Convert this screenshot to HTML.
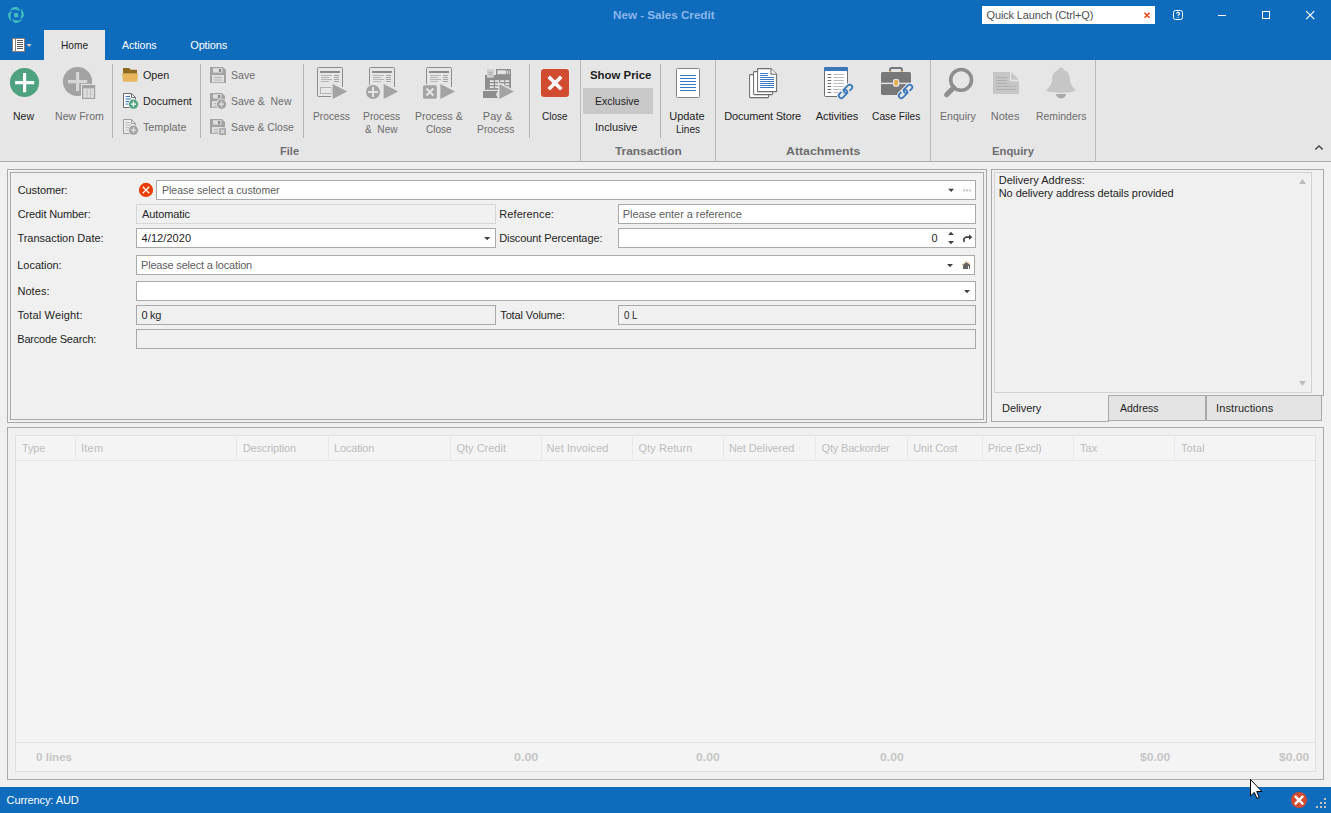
<!DOCTYPE html><html><head><meta charset="utf-8"><title>New - Sales Credit</title><style>
html,body{margin:0;padding:0;}body{width:1331px;height:813px;position:relative;overflow:hidden;background:#f0f0f0;font-family:"Liberation Sans",sans-serif;font-size:11px;color:#1e1e1e;}
div,svg,span{position:absolute;display:block;}span{white-space:pre;line-height:13px;height:13px;}b{font-weight:bold}
</style></head><body>
<div style="left:0px;top:0px;width:1331px;height:60px;background:#0f6cbd;"></div>
<div style="left:0px;top:60px;width:1331px;height:101px;background:#e6e6e6;"></div>
<div style="left:0px;top:161px;width:1331px;height:1px;background:#ababab;"></div>
<div style="left:44px;top:30px;width:61px;height:31px;background:#e6e6e6;"></div>
<div style="left:982px;top:6px;width:173px;height:18px;background:#ffffff;"></div>
<div style="left:0px;top:787px;width:1331px;height:26px;background:#0f6cbd;"></div>
<div style="left:112px;top:64px;width:1px;height:74px;background:#b4b4b4;"></div>
<div style="left:200px;top:64px;width:1px;height:74px;background:#b4b4b4;"></div>
<div style="left:303px;top:64px;width:1px;height:74px;background:#b4b4b4;"></div>
<div style="left:529px;top:64px;width:1px;height:74px;background:#b4b4b4;"></div>
<div style="left:660px;top:64px;width:1px;height:74px;background:#b4b4b4;"></div>
<div style="left:580px;top:60px;width:1px;height:101px;background:#b9b9b9;"></div>
<div style="left:715px;top:60px;width:1px;height:101px;background:#b9b9b9;"></div>
<div style="left:930px;top:60px;width:1px;height:101px;background:#b9b9b9;"></div>
<div style="left:1095px;top:60px;width:1px;height:101px;background:#b9b9b9;"></div>
<div style="left:583px;top:88px;width:70px;height:26px;background:#c8c8c8;"></div>
<div style="left:7px;top:169px;width:980px;height:254px;border:1px solid #a9a9a9;box-sizing:border-box;"></div>
<div style="left:10px;top:172px;width:974px;height:248px;border:1px solid #a9a9a9;box-sizing:border-box;"></div>
<div style="left:156px;top:180px;width:820px;height:20px;background:#ffffff;border:1px solid #a9a9a9;box-sizing:border-box;"></div>
<div style="left:136px;top:204px;width:360px;height:20px;background:#f0f0f0;border:1px solid #d6d6d6;box-sizing:border-box;"></div>
<div style="left:618px;top:204px;width:358px;height:20px;background:#ffffff;border:1px solid #a9a9a9;box-sizing:border-box;"></div>
<div style="left:136px;top:228px;width:360px;height:20px;background:#ffffff;border:1px solid #a9a9a9;box-sizing:border-box;"></div>
<div style="left:618px;top:228px;width:358px;height:20px;background:#ffffff;border:1px solid #a9a9a9;box-sizing:border-box;"></div>
<div style="left:136px;top:255px;width:839px;height:20px;background:#ffffff;border:1px solid #a9a9a9;box-sizing:border-box;"></div>
<div style="left:136px;top:281px;width:840px;height:20px;background:#ffffff;border:1px solid #a9a9a9;box-sizing:border-box;"></div>
<div style="left:136px;top:305px;width:360px;height:20px;background:#f0f0f0;border:1px solid #a9a9a9;box-sizing:border-box;"></div>
<div style="left:618px;top:305px;width:358px;height:20px;background:#f0f0f0;border:1px solid #a9a9a9;box-sizing:border-box;"></div>
<div style="left:136px;top:329px;width:840px;height:20px;background:#f0f0f0;border:1px solid #a9a9a9;box-sizing:border-box;"></div>
<div style="left:991px;top:169px;width:333px;height:1px;background:#a9a9a9;"></div>
<div style="left:991px;top:169px;width:1px;height:253px;background:#a9a9a9;"></div>
<div style="left:1323px;top:169px;width:1px;height:227px;background:#a9a9a9;"></div>
<div style="left:991px;top:421px;width:118px;height:1px;background:#a9a9a9;"></div>
<div style="left:1108px;top:395px;width:98px;height:26px;background:#e4e4e4;border:1px solid #a9a9a9;box-sizing:border-box;"></div>
<div style="left:1206px;top:395px;width:116px;height:26px;background:#e4e4e4;border:1px solid #a9a9a9;box-sizing:border-box;"></div>
<div style="left:1108px;top:395px;width:216px;height:1px;background:#a9a9a9;"></div>
<div style="left:994px;top:172px;width:318px;height:221px;border:1px solid #d2d2d2;box-sizing:border-box;"></div>
<div style="left:7px;top:427px;width:1317px;height:353px;border:1px solid #a9a9a9;box-sizing:border-box;"></div>
<div style="left:15px;top:435px;width:1301px;height:337px;background:#f4f4f4;border:1px solid #dfdfdf;box-sizing:border-box;"></div>
<div style="left:16px;top:460px;width:1299px;height:1px;background:#e3e3e3;"></div>
<div style="left:16px;top:742px;width:1299px;height:1px;background:#e3e3e3;"></div>
<div style="left:75px;top:436px;width:1px;height:24px;background:#e8e8e8;"></div>
<div style="left:236px;top:436px;width:1px;height:24px;background:#e8e8e8;"></div>
<div style="left:328px;top:436px;width:1px;height:24px;background:#e8e8e8;"></div>
<div style="left:450px;top:436px;width:1px;height:24px;background:#e8e8e8;"></div>
<div style="left:541px;top:436px;width:1px;height:24px;background:#e8e8e8;"></div>
<div style="left:632px;top:436px;width:1px;height:24px;background:#e8e8e8;"></div>
<div style="left:723px;top:436px;width:1px;height:24px;background:#e8e8e8;"></div>
<div style="left:815px;top:436px;width:1px;height:24px;background:#e8e8e8;"></div>
<div style="left:907px;top:436px;width:1px;height:24px;background:#e8e8e8;"></div>
<div style="left:982px;top:436px;width:1px;height:24px;background:#e8e8e8;"></div>
<div style="left:1073px;top:436px;width:1px;height:24px;background:#e8e8e8;"></div>
<div style="left:1174px;top:436px;width:1px;height:24px;background:#e8e8e8;"></div>
<svg style="left:0;top:0" width="1331" height="813" viewBox="0 0 1331 813"><circle cx="16" cy="15" r="6.6" fill="none" stroke="#41bfbf" stroke-width="2.6"/><path d="M18.23 6.69 Q21.34 10.02 20.60 15.00" fill="none" stroke="#0f6cbd" stroke-width="1.35"/><path d="M24.31 17.23 Q20.98 20.34 16.00 19.60" fill="none" stroke="#0f6cbd" stroke-width="1.35"/><path d="M13.77 23.31 Q10.66 19.98 11.40 15.00" fill="none" stroke="#0f6cbd" stroke-width="1.35"/><path d="M7.69 12.77 Q11.02 9.66 16.00 10.40" fill="none" stroke="#0f6cbd" stroke-width="1.35"/><rect x="14" y="13" width="4.2" height="4.2" rx="0.8" fill="#41bfbf"/><g shape-rendering="crispEdges"><rect x="12.5" y="38.5" width="12" height="13" fill="#fff" stroke="#8c7d78"/><rect x="15" y="39" width="1" height="12" fill="#8c7d78"/><rect x="17" y="40" width="6" height="1" fill="#5a5a5a"/><rect x="17" y="42" width="6" height="1" fill="#5a5a5a"/><rect x="17" y="44" width="6" height="1" fill="#5a5a5a"/><rect x="17" y="46" width="6" height="1" fill="#5a5a5a"/><rect x="17" y="48" width="6" height="1" fill="#5a5a5a"/></g><path d="M26.6 44 h5 l-2.5 3 z" fill="#d9cdc4"/><g fill="none" stroke="#fff" stroke-width="1"><rect x="1173.5" y="10.5" width="9" height="9" rx="2"/><path d="M1218 15.5 h8" shape-rendering="crispEdges"/><rect x="1262.5" y="11.5" width="7" height="7" shape-rendering="crispEdges"/><path d="M1306.2 11.2 l8 8 M1314.2 11.2 l-8 8" stroke-width="1.2"/><path d="M1176.6 13.6 q0.2-1.2 1.5-1.2 q1.4 0 1.4 1.2 q0 0.8-0.8 1.2 q-0.6 0.3-0.6 1" stroke-width="1.15"/></g><rect x="1177.6" y="16.9" width="1" height="1" fill="#fff"/><path d="M1144.5 12.8 l5 5 M1149.5 12.8 l-5 5" stroke="#e8430f" stroke-width="1.5" fill="none"/><path d="M1315.3 149.6 l3.7 -3.6 l3.7 3.6" stroke="#444" stroke-width="1.4" fill="none"/><circle cx="24.5" cy="82.5" r="14.6" fill="#4fa27f"/><path d="M15 81 h8 v-8 h3.2 v8 h8 v3.2 h-8 v8 h-3.2 v-8 h-8 z" fill="#fff"/><circle cx="77.5" cy="81.5" r="14.6" fill="#a3a3a3"/><path d="M68 80 h8 v-8 h3.2 v8 h8 v3.2 h-8 v8 h-3.2 v-8 h-8 z" fill="#d6d6d6"/><rect x="81" y="84" width="15.5" height="16" fill="#e6e6e6"/><rect x="82" y="85" width="13.2" height="14" fill="#a3a3a3"/><rect x="83.3" y="88.4" width="10.6" height="9.4" fill="#dedede"/><rect x="86.4" y="88.4" width="1.2" height="9.4" fill="#c2c2c2"/><rect x="90" y="88.4" width="1.2" height="9.4" fill="#c2c2c2"/><path d="M123 68 h6.2 l1.6 1.7 h6.2 v4 h-14 z" fill="#8e6b20"/><path d="M122 73.4 h16.2 l-1 8.4 h-14.2 z" fill="#e8b55c"/><path d="M123.5 93.5 h8 l4 4 v10 h-12 z" fill="#fff" stroke="#6e6e6e" stroke-width="1"/><path d="M131.5 93.5 v4 h4" fill="none" stroke="#6e6e6e" stroke-width="1"/><rect x="125.6" y="96.0" width="4.5" height="1.1" fill="#3b78c3"/><rect x="125.6" y="98.5" width="5.5" height="1.1" fill="#3b78c3"/><rect x="125.6" y="101.0" width="5.5" height="1.1" fill="#3b78c3"/><rect x="125.6" y="103.5" width="4.5" height="1.1" fill="#3b78c3"/><circle cx="133.5" cy="104.2" r="5.4" fill="#e6e6e6"/><circle cx="133.5" cy="104.2" r="4.6" fill="#4fa27f"/><path d="M130.9 104.2 h5.2 M133.5 101.6 v5.2" stroke="#fff" stroke-width="1.3" fill="none"/><path d="M123.5 119.5 h8 l4 4 v10 h-12 z" fill="#ececec" stroke="#9c9c9c" stroke-width="1"/><path d="M131.5 119.5 v4 h4" fill="none" stroke="#9c9c9c" stroke-width="1"/><rect x="125.6" y="122.0" width="4.5" height="1.1" fill="#bcbcbc"/><rect x="125.6" y="124.5" width="5.5" height="1.1" fill="#bcbcbc"/><rect x="125.6" y="127.0" width="5.5" height="1.1" fill="#bcbcbc"/><rect x="125.6" y="129.5" width="4.5" height="1.1" fill="#bcbcbc"/><circle cx="133.5" cy="130.2" r="5.4" fill="#e6e6e6"/><circle cx="133.5" cy="130.2" r="4.6" fill="#a3a3a3"/><path d="M130.9 130.2 h5.2 M133.5 127.6 v5.2" stroke="#e2e2e2" stroke-width="1.3" fill="none"/><path d="M210 67 h13 l3 3 v13 h-16 z" fill="#a3a3a3"/><rect x="213" y="68.2" width="9.5" height="4.4" fill="#dedede"/><rect x="219" y="69" width="2.2" height="3" fill="#8a8a8a"/><rect x="212" y="75" width="12" height="7.199999999999999" fill="#dedede"/><rect x="214" y="77" width="8" height="1" fill="#b4b4b4"/><rect x="214" y="79.5" width="8" height="1" fill="#b4b4b4"/><path d="M210 93 h12 l3 3 v12 h-15 z" fill="#a3a3a3"/><rect x="213" y="94.2" width="8.5" height="4.4" fill="#dedede"/><rect x="218" y="95" width="2.2" height="3" fill="#8a8a8a"/><rect x="212" y="101" width="11" height="6.199999999999999" fill="#dedede"/><rect x="214" y="103" width="7" height="1" fill="#b4b4b4"/><rect x="214" y="105.5" width="7" height="1" fill="#b4b4b4"/><circle cx="221.5" cy="104.2" r="5.5" fill="#e6e6e6"/><circle cx="221.5" cy="104.2" r="4.7" fill="#a3a3a3"/><path d="M218.9 104.2 h5.2 M221.5 101.6 v5.2" stroke="#e2e2e2" stroke-width="1.3" fill="none"/><path d="M210 119 h12 l3 3 v12 h-15 z" fill="#a3a3a3"/><rect x="213" y="120.2" width="8.5" height="4.4" fill="#dedede"/><rect x="218" y="121" width="2.2" height="3" fill="#8a8a8a"/><rect x="212" y="127" width="11" height="6.199999999999999" fill="#dedede"/><rect x="214" y="129" width="7" height="1" fill="#b4b4b4"/><rect x="214" y="131.5" width="7" height="1" fill="#b4b4b4"/><rect x="218.4" y="127.4" width="8.4" height="8.4" fill="#e6e6e6"/><rect x="219.2" y="128.2" width="6.8" height="6.8" fill="#a3a3a3"/><path d="M220.8 129.8 l3.6 3.6 M224.4 129.8 l-3.6 3.6" stroke="#e2e2e2" stroke-width="1.3" fill="none"/><path d="M331 96.5 H318.5 a1 1 0 0 1 -1 -1 V68.5 a1 1 0 0 1 1 -1 H341.5 a1 1 0 0 1 1 1 V87" fill="none" stroke="#8c8c8c" stroke-width="1"/><rect x="320" y="71" width="20" height="2" fill="#8c8c8c"/><rect x="321" y="75" width="11" height="1" fill="#b4b4b4"/><rect x="334" y="75" width="5" height="1" fill="#a4a4a4"/><rect x="321" y="77" width="8" height="1" fill="#b4b4b4"/><rect x="334" y="77" width="5" height="1" fill="#a4a4a4"/><rect x="321" y="79" width="11" height="1" fill="#b4b4b4"/><rect x="334" y="79" width="5" height="1" fill="#a4a4a4"/><rect x="321" y="81" width="8" height="1" fill="#b4b4b4"/><rect x="334" y="81" width="5" height="1" fill="#a4a4a4"/><rect x="320.5" y="87.5" width="11" height="6" fill="none" stroke="#b4b4b4"/><path d="M331.40000000000003 82 v18.8 l18.5 -9.4 z" fill="#e6e6e6"/><path d="M332.6 83.9 v15.2 l14.6 -7.6 z" fill="#a3a3a3"/><path d="M369.5 85 V68.5 a1 1 0 0 1 1 -1 H393.5 a1 1 0 0 1 1 1 V87" fill="none" stroke="#8c8c8c" stroke-width="1"/><rect x="372" y="71" width="20" height="2" fill="#8c8c8c"/><rect x="373" y="75" width="11" height="1" fill="#b4b4b4"/><rect x="386" y="75" width="5" height="1" fill="#a4a4a4"/><rect x="373" y="77" width="8" height="1" fill="#b4b4b4"/><rect x="386" y="77" width="5" height="1" fill="#a4a4a4"/><rect x="373" y="79" width="11" height="1" fill="#b4b4b4"/><rect x="386" y="79" width="5" height="1" fill="#a4a4a4"/><rect x="373" y="81" width="8" height="1" fill="#b4b4b4"/><rect x="386" y="81" width="5" height="1" fill="#a4a4a4"/><circle cx="373" cy="92" r="8" fill="#e6e6e6"/><circle cx="373" cy="92" r="7" fill="#a3a3a3"/><path d="M368 92 h10 M373 87 v10" stroke="#e4e4e4" stroke-width="2" fill="none"/><path d="M382.40000000000003 82 v18.8 l18.5 -9.4 z" fill="#e6e6e6"/><path d="M383.6 83.9 v15.2 l14.6 -7.6 z" fill="#a3a3a3"/><path d="M426.5 85 V68.5 a1 1 0 0 1 1 -1 H450.5 a1 1 0 0 1 1 1 V87" fill="none" stroke="#8c8c8c" stroke-width="1"/><rect x="429" y="71" width="20" height="2" fill="#8c8c8c"/><rect x="430" y="75" width="11" height="1" fill="#b4b4b4"/><rect x="443" y="75" width="5" height="1" fill="#a4a4a4"/><rect x="430" y="77" width="8" height="1" fill="#b4b4b4"/><rect x="443" y="77" width="5" height="1" fill="#a4a4a4"/><rect x="430" y="79" width="11" height="1" fill="#b4b4b4"/><rect x="443" y="79" width="5" height="1" fill="#a4a4a4"/><rect x="430" y="81" width="8" height="1" fill="#b4b4b4"/><rect x="443" y="81" width="5" height="1" fill="#a4a4a4"/><rect x="422" y="84" width="16" height="16" fill="#e6e6e6"/><rect x="423" y="85.2" width="13.8" height="13.6" rx="1.6" fill="#a3a3a3"/><path d="M426.4 88.5 l7 7 M433.4 88.5 l-7 7" stroke="#e4e4e4" stroke-width="2.2" fill="none"/><path d="M439.2 82 v18.8 l18.5 -9.4 z" fill="#e6e6e6"/><path d="M440.4 83.9 v15.2 l14.6 -7.6 z" fill="#a3a3a3"/><rect x="485" y="75" width="26" height="14.8" fill="#8e8e8e"/><rect x="496" y="69" width="15" height="6.5" fill="#8e8e8e"/><rect x="497.4" y="70.3" width="12.2" height="3.9" fill="#e4e4e4"/><rect x="506.3" y="70.6" width="2.2" height="3.2" fill="none" stroke="#8e8e8e" stroke-width="0.8"/><path d="M487 68.8 l1.2 0.8 l1.1 -0.8 l1.1 0.8 l1.1 -0.8 l1.1 0.8 l1.2 -0.8 v9 h-6.8 z" fill="#cfcfcf"/><rect x="488.6" y="72" width="3.6" height="0.9" fill="#a8a8a8"/><rect x="488.6" y="74" width="3.6" height="0.9" fill="#a8a8a8"/><rect x="489.8" y="80.2" width="4" height="1.8" fill="#e4e4e4"/><rect x="489.8" y="83.3" width="4" height="1.8" fill="#e4e4e4"/><rect x="489.8" y="86.3" width="4" height="1.8" fill="#e4e4e4"/><rect x="495" y="80.2" width="4" height="1.8" fill="#e4e4e4"/><rect x="495" y="83.3" width="4" height="1.8" fill="#e4e4e4"/><rect x="495" y="86.3" width="4" height="1.8" fill="#e4e4e4"/><rect x="500.2" y="80.2" width="4" height="1.8" fill="#e4e4e4"/><rect x="500.2" y="83.3" width="4" height="1.8" fill="#e4e4e4"/><rect x="500.2" y="86.3" width="4" height="1.8" fill="#e4e4e4"/><rect x="505.2" y="80.2" width="4" height="1.8" fill="#e4e4e4"/><rect x="505.2" y="83.3" width="4" height="1.8" fill="#e4e4e4"/><rect x="505.2" y="86.3" width="4" height="1.8" fill="#e4e4e4"/><path d="M483 91 h15 l-2 3.5 l2 3.5 h-15 z" fill="#8e8e8e"/><path d="M498.2 82 v18.8 l18.5 -9.4 z" fill="#e6e6e6"/><path d="M499.4 83.9 v15.2 l14.6 -7.6 z" fill="#a3a3a3"/><rect x="541" y="69" width="28" height="28" rx="3.2" fill="#d04b2f"/><path d="M548.7 76.7 l12.6 12.6 M561.3 76.7 l-12.6 12.6" stroke="#fff" stroke-width="3.6" fill="none"/><rect x="676.5" y="68.5" width="23" height="29" rx="1" fill="#fff" stroke="#858585"/><rect x="680" y="75" width="16" height="1" fill="#3b78c3"/><rect x="680" y="78" width="16" height="1" fill="#3b78c3"/><rect x="680" y="81" width="16" height="1" fill="#3b78c3"/><rect x="680" y="84" width="16" height="1" fill="#3b78c3"/><rect x="680" y="87" width="16" height="1" fill="#3b78c3"/><rect x="680" y="90" width="16" height="1" fill="#3b78c3"/><rect x="749.6" y="74.6" width="19" height="23" rx="0.8" fill="#fff" stroke="#6e6e6e" stroke-width="1.05"/><rect x="753.6" y="71.6" width="19" height="23" rx="0.8" fill="#fff" stroke="#6e6e6e" stroke-width="1.05"/><path d="M757.6 68.6 h13.4 l5.6 5.6 v17.4 h-19 z" fill="#fff" stroke="#6e6e6e" stroke-width="1.05" stroke-linejoin="round"/><path d="M771 68.6 v5.6 h5.6" fill="#f2f2f2" stroke="#6e6e6e" stroke-width="1.05" stroke-linejoin="round"/><rect x="760" y="73" width="8" height="1" fill="#3b78c3"/><rect x="760" y="75" width="8" height="1" fill="#3b78c3"/><rect x="760" y="77" width="14" height="1" fill="#3b78c3"/><rect x="760" y="79" width="14" height="1" fill="#3b78c3"/><rect x="760" y="81" width="14" height="1" fill="#3b78c3"/><rect x="760" y="83" width="14" height="1" fill="#3b78c3"/><rect x="760" y="85" width="14" height="1" fill="#3b78c3"/><rect x="760" y="87" width="14" height="1" fill="#3b78c3"/><rect x="824.5" y="67.5" width="23" height="29" rx="1" fill="#fff" stroke="#6e6e6e"/><path d="M824 68 a1 1 0 0 1 1 -1 h22 a1 1 0 0 1 1 1 v3 h-24 z" fill="#3b77b9"/><rect x="827.6" y="74" width="3.6" height="1" fill="#6e6e6e"/><rect x="833.3" y="74" width="10.8" height="1" fill="#bdbdbd"/><rect x="827.6" y="77" width="3.6" height="1" fill="#6e6e6e"/><rect x="833.3" y="77" width="10.8" height="1" fill="#bdbdbd"/><rect x="827.6" y="80" width="3.6" height="1" fill="#6e6e6e"/><rect x="833.3" y="80" width="10.8" height="1" fill="#bdbdbd"/><rect x="827.6" y="83" width="3.6" height="1" fill="#6e6e6e"/><rect x="833.3" y="83" width="10.8" height="1" fill="#bdbdbd"/><rect x="827.6" y="86" width="3.6" height="1" fill="#6e6e6e"/><rect x="833.3" y="86" width="10.8" height="1" fill="#bdbdbd"/><rect x="827.6" y="89" width="3.6" height="1" fill="#6e6e6e"/><rect x="833.3" y="89" width="10.8" height="1" fill="#bdbdbd"/><rect x="827.6" y="92" width="3.6" height="1" fill="#6e6e6e"/><rect x="833.3" y="92" width="10.8" height="1" fill="#bdbdbd"/><path d="M843.00 97.95 L853.00 87.95 V97.95 z" fill="#e6e6e6"/><path d="M-2.45 -2.50 h4.90 a2.5 2.5 0 0 1 0 5.0 h-4.90 a2.5 2.5 0 0 1 0 -5.0 z" fill="#e6e6e6" stroke="#e6e6e6" stroke-width="3.9" transform="translate(848.00 88.95) rotate(-45)"/><path d="M-2.45 -2.50 h4.90 a2.5 2.5 0 0 1 0 5.0 h-4.90 a2.5 2.5 0 0 1 0 -5.0 z" fill="#e6e6e6" stroke="#e6e6e6" stroke-width="3.9" transform="translate(843.00 93.95) rotate(-45)"/><path d="M-2.45 -2.50 h4.90 a2.5 2.5 0 0 1 0 5.0 h-4.90 a2.5 2.5 0 0 1 0 -5.0 z" fill="none" stroke="#3a78be" stroke-width="1.75" stroke-dasharray="15.35 2.3 7.85" transform="translate(848.00 88.95) rotate(-45)"/><path d="M-2.45 -2.50 h4.90 a2.5 2.5 0 0 1 0 5.0 h-4.90 a2.5 2.5 0 0 1 0 -5.0 z" fill="none" stroke="#3a78be" stroke-width="1.75" stroke-dasharray="2.60 2.3 20.61" transform="translate(843.00 93.95) rotate(-45)"/><path d="M890.1 72.5 v-3 a1.6 1.6 0 0 1 1.6 -1.6 h8.6 a1.6 1.6 0 0 1 1.6 1.6 v3" fill="none" stroke="#787878" stroke-width="2"/><rect x="889.1" y="71" width="2" height="1.2" fill="#e8b04c"/><rect x="900.9" y="71" width="2" height="1.2" fill="#e8b04c"/><rect x="881" y="72.1" width="30" height="22.8" rx="1.6" fill="#787878"/><rect x="881" y="82.7" width="30" height="1.4" fill="#e6e6e6"/><rect x="893" y="79" width="6.2" height="7.8" rx="1.8" fill="#e6e6e6"/><rect x="894.2" y="80.1" width="3.8" height="5.5" rx="1" fill="#e8b04c"/><path d="M903.05 97.95 L913.05 87.95 V97.95 z" fill="#e6e6e6"/><path d="M-2.45 -2.50 h4.90 a2.5 2.5 0 0 1 0 5.0 h-4.90 a2.5 2.5 0 0 1 0 -5.0 z" fill="#e6e6e6" stroke="#e6e6e6" stroke-width="3.9" transform="translate(908.05 88.95) rotate(-45)"/><path d="M-2.45 -2.50 h4.90 a2.5 2.5 0 0 1 0 5.0 h-4.90 a2.5 2.5 0 0 1 0 -5.0 z" fill="#e6e6e6" stroke="#e6e6e6" stroke-width="3.9" transform="translate(903.05 93.95) rotate(-45)"/><path d="M-2.45 -2.50 h4.90 a2.5 2.5 0 0 1 0 5.0 h-4.90 a2.5 2.5 0 0 1 0 -5.0 z" fill="none" stroke="#3a78be" stroke-width="1.75" stroke-dasharray="15.35 2.3 7.85" transform="translate(908.05 88.95) rotate(-45)"/><path d="M-2.45 -2.50 h4.90 a2.5 2.5 0 0 1 0 5.0 h-4.90 a2.5 2.5 0 0 1 0 -5.0 z" fill="none" stroke="#3a78be" stroke-width="1.75" stroke-dasharray="2.60 2.3 20.61" transform="translate(903.05 93.95) rotate(-45)"/><circle cx="961.1" cy="79.9" r="10.4" fill="none" stroke="#8e8e8e" stroke-width="3.6"/><path d="M953.6 87.7 L946.6 94.7" stroke="#8e8e8e" stroke-width="5" stroke-linecap="round" fill="none"/><path d="M993 72 h17 v9.3 h9 v12.6 h-26 z" fill="#c6c6c6"/><path d="M1011.2 72.1 v7.7 h7.8 z" fill="#c6c6c6"/><rect x="996" y="77" width="11" height="1" fill="#b0b0b0"/><rect x="996" y="80" width="11" height="1" fill="#b0b0b0"/><rect x="996" y="83" width="11" height="1" fill="#b0b0b0"/><rect x="996" y="86" width="20" height="1" fill="#b0b0b0"/><rect x="996" y="89" width="20" height="1" fill="#b0b0b0"/><path d="M1056 94 h10 a5 4.4 0 0 1 -10 0 z" fill="#a9a9a9"/><path d="M1061 67.4 a3 3 0 0 1 3 2.9 c3.6 1.3 5.9 4.2 5.9 8.2 c0 5 2.2 8.2 6.3 11.8 c-2 1.6 -8 2.5 -15.2 2.5 c-7.2 0 -13.200 -0.9 -15.2 -2.5 c4.100 -3.6 6.300 -6.800 6.300 -11.8 c0 -4 2.300 -6.900 5.900 -8.200 a3 3 0 0 1 3 -2.900 z" fill="#c6c6c6"/><path d="M948.10 188.8 h6 l-3 3.2 z" fill="#404040"/><path d="M484.15 237.1 h6 l-3 3.2 z" fill="#404040"/><path d="M947.00 264 h6 l-3 3.2 z" fill="#404040"/><path d="M964.00 290 h6 l-3 3.2 z" fill="#404040"/><rect x="963" y="189.4" width="2" height="2" fill="#c4c4c4"/><rect x="966" y="189.4" width="2" height="2" fill="#c4c4c4"/><rect x="969" y="189.4" width="2" height="2" fill="#c4c4c4"/><path d="M948 235 h6 l-3 -3.2 z" fill="#404040"/><path d="M948 241 h6 l-3 3.200 z" fill="#404040"/><path d="M969 234.300 l3.3 2.900 l-3.3 2.900 z" fill="#404040"/><path d="M969.4 237.2 h-3.600 a3 2.800 0 0 0 -1.200 4.600" fill="none" stroke="#404040" stroke-width="1.7"/><path d="M963 264.800 l3.400 -2.600 l3.600 2.600 v4.200 h-7 z" fill="#636363"/><rect x="968" y="266.200" width="1" height="2.800" fill="#f4f4f4"/><path d="M962 264.900 l4.400 -3.500 l4.400 3.500" fill="none" stroke="#f0a63a" stroke-width="1" stroke-dasharray="1.2 0.700"/><circle cx="146" cy="189.900" r="7.100" fill="#e83d05"/><path d="M142.700 186.700 l6.600 6.600 M149.300 186.700 l-6.600 6.600" stroke="#fff" stroke-width="1.250" fill="none"/><path d="M1299 184 h7 l-3.500 -5 z" fill="#bcbcbc"/><path d="M1299 381 h7 l-3.500 5 z" fill="#bcbcbc"/><circle cx="1299" cy="800" r="8" fill="#d24a30"/><path d="M1295.5 796.700 l7 7 M1302.5 796.700 l-7 7" stroke="#fff" stroke-width="2.400" stroke-linecap="round" fill="none"/><rect x="1324" y="798" width="2" height="2" fill="#cdc2b8" shape-rendering="crispEdges"/><rect x="1320" y="802" width="2" height="2" fill="#cdc2b8" shape-rendering="crispEdges"/><rect x="1324" y="802" width="2" height="2" fill="#cdc2b8" shape-rendering="crispEdges"/><rect x="1316" y="806" width="2" height="2" fill="#cdc2b8" shape-rendering="crispEdges"/><rect x="1320" y="806" width="2" height="2" fill="#cdc2b8" shape-rendering="crispEdges"/><rect x="1324" y="806" width="2" height="2" fill="#cdc2b8" shape-rendering="crispEdges"/><path d="M1250.500 779.500 v16.500 l3.800 -3.600 l2.600 6 l2.400 -1 l-2.600 -5.900 h5.200 z" fill="#fff" stroke="#000" stroke-width="1" stroke-linejoin="miter"/></svg>
<span class="t" id="t0" style="left:613.00px;top:9px;color:#8cb6ea;transform:scaleX(1.0584);transform-origin:0 0;font-weight:bold;">New - Sales Credit</span>
<span class="t" id="t1" style="left:986.50px;top:9px;color:#505050;letter-spacing:-0.141px;">Quick Launch (Ctrl+Q)</span>
<span class="t" id="t2" style="left:60.90px;top:39px;color:#1e1e1e;transform:scaleX(0.9217);transform-origin:0 0;">Home</span>
<span class="t" id="t3" style="left:121.78px;top:39px;color:#ffffff;transform:scaleX(0.9605);transform-origin:0 0;">Actions</span>
<span class="t" id="t4" style="left:190.25px;top:39px;color:#ffffff;letter-spacing:-0.160px;">Options</span>
<span class="t" id="t5" style="left:13.28px;top:110px;color:#1e1e1e;transform:scaleX(0.9515);transform-origin:0 0;">New</span>
<span class="t" id="t6" style="left:54.77px;top:110px;color:#6c6c6c;transform:scaleX(0.9628);transform-origin:0 0;">New From</span>
<span class="t" id="t7" style="left:142.78px;top:69px;color:#1e1e1e;transform:scaleX(0.9770);transform-origin:0 0;">Open</span>
<span class="t" id="t8" style="left:142.78px;top:95px;color:#1e1e1e;transform:scaleX(0.9736);transform-origin:0 0;">Document</span>
<span class="t" id="t9" style="left:142.78px;top:121px;color:#6c6c6c;transform:scaleX(0.9730);transform-origin:0 0;">Template</span>
<span class="t" id="t10" style="left:230.78px;top:69px;color:#6c6c6c;transform:scaleX(0.9574);transform-origin:0 0;">Save</span>
<span class="t" id="t11" style="left:230.78px;top:95px;color:#6c6c6c;transform:scaleX(0.9505);transform-origin:0 0;">Save &amp;  New</span>
<span class="t" id="t12" style="left:230.78px;top:121px;color:#6c6c6c;transform:scaleX(0.9430);transform-origin:0 0;">Save &amp; Close</span>
<span class="t" id="t13" style="left:280.12px;top:145px;color:#6e6e6e;transform:scaleX(1.0068);transform-origin:0 0;font-weight:bold;">File</span>
<span class="t" id="t14" style="left:312.77px;top:110px;color:#6c6c6c;transform:scaleX(0.9291);transform-origin:0 0;">Process</span>
<span class="t" id="t15" style="left:363.15px;top:110px;color:#6c6c6c;transform:scaleX(0.9378);transform-origin:0 0;">Process</span>
<span class="t" id="t16" style="left:364.90px;top:123px;color:#6c6c6c;transform:scaleX(0.9200);transform-origin:0 0;">&amp;  New</span>
<span class="t" id="t17" style="left:414.90px;top:110px;color:#6c6c6c;transform:scaleX(0.9496);transform-origin:0 0;">Process &amp;</span>
<span class="t" id="t18" style="left:425.52px;top:123px;color:#6c6c6c;transform:scaleX(0.9112);transform-origin:0 0;">Close</span>
<span class="t" id="t19" style="left:482.75px;top:110px;color:#6c6c6c;letter-spacing:0.056px;">Pay &amp;</span>
<span class="t" id="t20" style="left:477.02px;top:123px;color:#6c6c6c;transform:scaleX(0.9390);transform-origin:0 0;">Process</span>
<span class="t" id="t21" style="left:541.65px;top:110px;color:#1e1e1e;transform:scaleX(0.9044);transform-origin:0 0;">Close</span>
<span class="t" id="t22" style="left:589.50px;top:69px;color:#1e1e1e;transform:scaleX(1.0364);transform-origin:0 0;font-weight:bold;">Show Price</span>
<span class="t" id="t23" style="left:594.90px;top:95px;color:#1e1e1e;transform:scaleX(0.9533);transform-origin:0 0;">Exclusive</span>
<span class="t" id="t24" style="left:595.12px;top:121px;color:#1e1e1e;letter-spacing:-0.070px;">Inclusive</span>
<span class="t" id="t25" style="left:669.25px;top:110px;color:#1e1e1e;letter-spacing:-0.032px;">Update</span>
<span class="t" id="t26" style="left:675.52px;top:123px;color:#1e1e1e;transform:scaleX(0.9173);transform-origin:0 0;">Lines</span>
<span class="t" id="t27" style="left:614.75px;top:145px;color:#6e6e6e;transform:scaleX(1.0814);transform-origin:0 0;font-weight:bold;">Transaction</span>
<span class="t" id="t28" style="left:724.25px;top:110px;color:#1e1e1e;letter-spacing:-0.192px;">Document Store</span>
<span class="t" id="t29" style="left:815.75px;top:110px;color:#1e1e1e;letter-spacing:-0.105px;">Activities</span>
<span class="t" id="t30" style="left:872.40px;top:110px;color:#1e1e1e;transform:scaleX(0.9302);transform-origin:0 0;">Case Files</span>
<span class="t" id="t31" style="left:785.62px;top:145px;color:#6e6e6e;transform:scaleX(1.1173);transform-origin:0 0;font-weight:bold;">Attachments</span>
<span class="t" id="t32" style="left:939.52px;top:110px;color:#6c6c6c;transform:scaleX(0.9622);transform-origin:0 0;">Enquiry</span>
<span class="t" id="t33" style="left:990.75px;top:110px;color:#6c6c6c;letter-spacing:-0.014px;">Notes</span>
<span class="t" id="t34" style="left:1035.90px;top:110px;color:#6c6c6c;transform:scaleX(0.9468);transform-origin:0 0;">Reminders</span>
<span class="t" id="t35" style="left:992.12px;top:145px;color:#6e6e6e;transform:scaleX(1.0268);transform-origin:0 0;font-weight:bold;">Enquiry</span>
<span class="t" id="t36" style="left:17.75px;top:184px;color:#1e1e1e;letter-spacing:-0.107px;">Customer:</span>
<span class="t" id="t37" style="left:17.75px;top:208px;color:#1e1e1e;letter-spacing:-0.125px;">Credit Number:</span>
<span class="t" id="t38" style="left:17.38px;top:232px;color:#1e1e1e;letter-spacing:-0.011px;">Transaction Date:</span>
<span class="t" id="t39" style="left:17.25px;top:259px;color:#1e1e1e;letter-spacing:-0.034px;">Location:</span>
<span class="t" id="t40" style="left:17.38px;top:285px;color:#1e1e1e;letter-spacing:0.074px;">Notes:</span>
<span class="t" id="t41" style="left:17.38px;top:309px;color:#1e1e1e;letter-spacing:0.150px;">Total Weight:</span>
<span class="t" id="t42" style="left:17.25px;top:333px;color:#1e1e1e;letter-spacing:-0.198px;">Barcode Search:</span>
<span class="t" id="t43" style="left:499.25px;top:208px;color:#1e1e1e;letter-spacing:0.094px;">Reference:</span>
<span class="t" id="t44" style="left:499.25px;top:232px;color:#1e1e1e;letter-spacing:-0.103px;">Discount Percentage:</span>
<span class="t" id="t45" style="left:500.25px;top:309px;color:#1e1e1e;letter-spacing:-0.125px;">Total Volume:</span>
<span class="t" id="t46" style="left:161.53px;top:184px;color:#5e5e5e;transform:scaleX(0.9569);transform-origin:0 0;">Please select a customer</span>
<span class="t" id="t47" style="left:142.12px;top:208px;color:#262626;letter-spacing:-0.132px;">Automatic</span>
<span class="t" id="t48" style="left:141.62px;top:232px;color:#1e1e1e;letter-spacing:0.062px;">4/12/2020</span>
<span class="t" id="t49" style="left:141.00px;top:259px;color:#5e5e5e;letter-spacing:-0.190px;">Please select a location</span>
<span class="t" id="t50" style="left:141.50px;top:309px;color:#262626;letter-spacing:-0.276px;">0 kg</span>
<span class="t" id="t51" style="left:622.75px;top:208px;color:#5e5e5e;letter-spacing:-0.062px;">Please enter a reference</span>
<span class="t" id="t52" style="left:931.50px;top:232px;color:#1e1e1e;">0</span>
<span class="t" id="t53" style="left:624.40px;top:309px;color:#262626;transform:scaleX(0.8843);transform-origin:0 0;">0 L</span>
<span class="t" id="t54" style="left:998.75px;top:174px;color:#1e1e1e;letter-spacing:0.030px;">Delivery Address:</span>
<span class="t" id="t55" style="left:998.75px;top:187px;color:#1e1e1e;letter-spacing:-0.072px;">No delivery address details provided</span>
<span class="t" id="t56" style="left:1002.00px;top:402px;color:#1e1e1e;letter-spacing:-0.057px;">Delivery</span>
<span class="t" id="t57" style="left:1119.53px;top:402px;color:#1e1e1e;transform:scaleX(0.9556);transform-origin:0 0;">Address</span>
<span class="t" id="t58" style="left:1216.12px;top:402px;color:#1e1e1e;letter-spacing:0.082px;">Instructions</span>
<span class="t" id="t59" style="left:21.77px;top:442px;color:#bdbdbd;transform:scaleX(0.9757);transform-origin:0 0;">Type</span>
<span class="t" id="t60" style="left:80.88px;top:442px;color:#bdbdbd;letter-spacing:0.310px;">Item</span>
<span class="t" id="t61" style="left:242.75px;top:442px;color:#bdbdbd;letter-spacing:-0.163px;">Description</span>
<span class="t" id="t62" style="left:334.00px;top:442px;color:#bdbdbd;letter-spacing:-0.172px;">Location</span>
<span class="t" id="t63" style="left:456.50px;top:442px;color:#bdbdbd;letter-spacing:-0.006px;">Qty Credit</span>
<span class="t" id="t64" style="left:546.50px;top:442px;color:#bdbdbd;letter-spacing:0.073px;">Net Invoiced</span>
<span class="t" id="t65" style="left:638.50px;top:442px;color:#bdbdbd;letter-spacing:0.082px;">Qty Return</span>
<span class="t" id="t66" style="left:729.00px;top:442px;color:#bdbdbd;letter-spacing:-0.113px;">Net Delivered</span>
<span class="t" id="t67" style="left:821.50px;top:442px;color:#bdbdbd;letter-spacing:-0.169px;">Qty Backorder</span>
<span class="t" id="t68" style="left:913.25px;top:442px;color:#bdbdbd;letter-spacing:-0.125px;">Unit Cost</span>
<span class="t" id="t69" style="left:987.75px;top:442px;color:#bdbdbd;letter-spacing:-0.204px;">Price (Excl)</span>
<span class="t" id="t70" style="left:1079.78px;top:442px;color:#bdbdbd;transform:scaleX(1.0043);transform-origin:0 0;">Tax</span>
<span class="t" id="t71" style="left:1180.88px;top:442px;color:#bdbdbd;letter-spacing:0.124px;">Total</span>
<span class="t" id="t72" style="left:35.62px;top:751px;color:#c6c6c6;transform:scaleX(1.0534);transform-origin:0 0;font-weight:bold;">0 lines</span>
<span class="t" id="t73" style="left:513.62px;top:751px;color:#c6c6c6;transform:scaleX(1.1340);transform-origin:0 0;font-weight:bold;">0.00</span>
<span class="t" id="t74" style="left:696.00px;top:751px;color:#c6c6c6;transform:scaleX(1.1053);transform-origin:0 0;font-weight:bold;">0.00</span>
<span class="t" id="t75" style="left:879.88px;top:751px;color:#c6c6c6;transform:scaleX(1.1053);transform-origin:0 0;font-weight:bold;">0.00</span>
<span class="t" id="t76" style="left:1139.75px;top:751px;color:#c6c6c6;transform:scaleX(1.1013);transform-origin:0 0;font-weight:bold;">$0.00</span>
<span class="t" id="t77" style="left:1278.75px;top:751px;color:#c6c6c6;transform:scaleX(1.1013);transform-origin:0 0;font-weight:bold;">$0.00</span>
<span class="t" id="t78" style="left:6.62px;top:794px;color:#ffffff;letter-spacing:-0.109px;">Currency: AUD</span>
</body></html>
